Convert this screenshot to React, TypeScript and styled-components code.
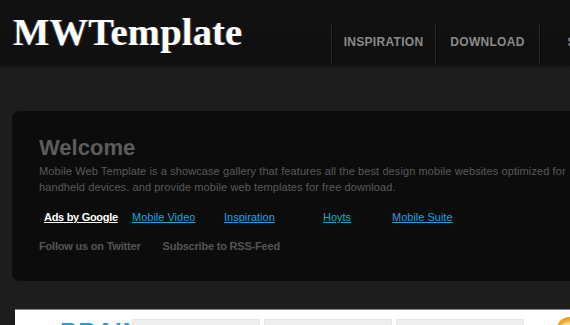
import React from 'react';
import styled, { createGlobalStyle } from 'styled-components';

const GlobalStyle = createGlobalStyle`
  html, body {
    margin: 0;
    padding: 0;
    background: #1d1d1d;
    overflow: hidden;
  }
  body {
    font-family: 'Liberation Sans', Arial, sans-serif;
  }
`;

const navItems = ['INSPIRATION', 'DOWNLOAD', 'SUBMIT'];

const adLinks = [
  { label: 'Mobile Video', width: 92 },
  { label: 'Inspiration', width: 99 },
  { label: 'Hoyts', width: 69 },
  { label: 'Mobile Suite', width: 90 },
];

export default function App() {
  return (
    <Page>
      <GlobalStyle />
      <Header>
        <Logo>MWTemplate</Logo>
        <Nav>
          {navItems.map((item) => (
            <NavItem key={item}>{item}</NavItem>
          ))}
        </Nav>
      </Header>

      <Main>
        <Card>
          <Title>Welcome</Title>
          <Intro>
            Mobile Web Template is a showcase gallery that features all the best design mobile
            websites optimized for handheld devices. and provide mobile web templates for free
            download.
          </Intro>
          <AdRow>
            <AdCell $width={88}>
              <AdTitle href="#">Ads by Google</AdTitle>
            </AdCell>
            {adLinks.map((l) => (
              <AdCell key={l.label} $width={l.width}>
                <AdLink href="#">{l.label}</AdLink>
              </AdCell>
            ))}
          </AdRow>
          <Social>
            <SocialLink href="#">Follow us on Twitter</SocialLink>
            <SocialLink href="#">Subscribe to RSS-Feed</SocialLink>
          </Social>
        </Card>

        <Gallery>
          <Brand>BRAIN</Brand>
          <Thumb />
          <Thumb />
          <Thumb />
          <Badge />
        </Gallery>
      </Main>
    </Page>
  );
}

const Page = styled.div`
  width: 570px;
  height: 325px;
  overflow: hidden;
  background: #1d1d1d;
`;

const Header = styled.header`
  height: 65px;
  display: flex;
  align-items: stretch;
  background: linear-gradient(#121212, #0f0f0f);
  box-shadow: 0 1px 3px rgba(0, 0, 0, 0.6);
  position: relative;
  z-index: 1;
`;

const Logo = styled.h1`
  flex: none;
  margin: 0;
  padding: 12px 0 0 13px;
  width: 331px;
  box-sizing: border-box;
  font-family: 'Liberation Serif', 'Times New Roman', serif;
  font-weight: bold;
  font-size: 38.5px;
  line-height: 40px;
  letter-spacing: 0.2px;
  color: #fff;
  text-shadow: -1px 0 0 rgba(90, 140, 220, 0.35), 1px 0 0 rgba(230, 170, 110, 0.3);
  white-space: nowrap;
`;

const Nav = styled.nav`
  flex: none;
  display: flex;
  align-self: flex-end;
  height: 41px;
`;

const NavItem = styled.a`
  width: 104px;
  flex: none;
  display: flex;
  align-items: center;
  justify-content: center;
  padding-bottom: 5px;
  box-sizing: border-box;
  border-left: 1px solid #272727;
  box-shadow: inset 1px 0 0 #0a0a0a;
  font-weight: bold;
  font-size: 12px;
  letter-spacing: 0.3px;
  color: #8a8a8a;
  white-space: nowrap;
`;

const Main = styled.main`
  padding: 46px 0 0 12px;
`;

const Card = styled.section`
  width: 640px;
  height: 170px;
  box-sizing: border-box;
  padding: 24px 0 0 27px;
  background: #0c0c0c;
  border-radius: 8px;
`;

const Title = styled.h2`
  margin: 0;
  font-size: 22px;
  line-height: 26px;
  font-weight: bold;
  color: #5c5c5c;
`;

const Intro = styled.p`
  margin: 2px 0 0;
  width: 545px;
  font-size: 11px;
  line-height: 16px;
  letter-spacing: 0.1px;
  color: #5a5a5a;
`;

const AdRow = styled.div`
  display: flex;
  margin-top: 15px;
  padding-left: 5px;
`;

const AdCell = styled.div<{ $width: number }>`
  width: ${(p) => p.$width}px;
  flex: none;
  font-size: 11px;
  line-height: 14px;
`;

const AdTitle = styled.a`
  color: #fff;
  font-weight: bold;
  letter-spacing: -0.3px;
  text-decoration: underline;
`;

const AdLink = styled.a`
  color: #1ca3dc;
  text-decoration: underline;
`;

const Social = styled.div`
  display: flex;
  gap: 22px;
  margin-top: 15px;
`;

const SocialLink = styled.a`
  font-size: 11px;
  font-weight: bold;
  letter-spacing: -0.2px;
  line-height: 14px;
  color: #555;
  text-decoration: none;
`;

const Gallery = styled.section`
  margin: 28px 0 0 3px;
  height: 40px;
  display: flex;
  align-items: flex-start;
  gap: 4px;
  padding: 9px 0 0 45px;
  background: #fff;
  border-top: 1px solid #8a8a8a;
  position: relative;
`;

const Brand = styled.span`
  width: 68px;
  flex: none;
  font-size: 24px;
  font-weight: bold;
  line-height: 26px;
  color: #1a9fdb;
  letter-spacing: 1px;
`;

const Thumb = styled.div`
  width: 128px;
  height: 30px;
  flex: none;
  background: #eeeeee;
  border: 1px solid #e4e4e4;
  box-sizing: border-box;
`;

const Badge = styled.div`
  position: absolute;
  left: 542px;
  top: 7px;
  width: 24px;
  height: 24px;
  border-radius: 50%;
  background: radial-gradient(circle at 50% 60%, #ffe7a6 0 40%, #f5a623 60%, #e8901a);
`;
